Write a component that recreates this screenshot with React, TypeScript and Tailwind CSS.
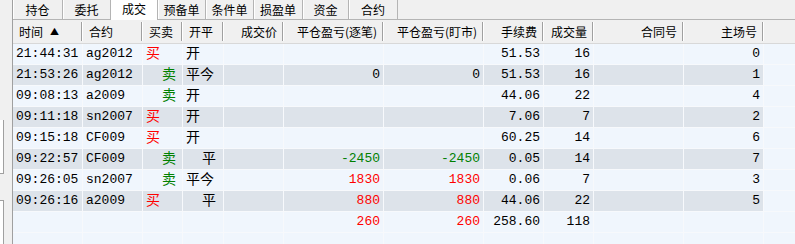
import React from "react";

type Align = "left" | "right";

interface Col {
    key: string;
    label: string;
    width: string;
    align: Align;
}

// column widths measured off the grid lines
const COLS: Col[] = [
    { key: "time", label: "时间", width: "w-[70px]", align: "left" },
    { key: "code", label: "合约", width: "w-[60px]", align: "left" },
    { key: "side", label: "买卖", width: "w-[40px]", align: "left" },
    { key: "oc", label: "开平", width: "w-[41px]", align: "left" },
    { key: "price", label: "成交价", width: "w-[60px]", align: "right" },
    { key: "pnl", label: "平仓盈亏(逐笔)", width: "w-[100px]", align: "right" },
    { key: "mtm", label: "平仓盈亏(盯市)", width: "w-[100px]", align: "right" },
    { key: "fee", label: "手续费", width: "w-[60px]", align: "right" },
    { key: "qty", label: "成交量", width: "w-[50px]", align: "right" },
    { key: "contract", label: "合同号", width: "w-[90px]", align: "right" },
    { key: "seat", label: "主场号", width: "w-[80px]", align: "right" },
];

const TABS = [
    { label: "持仓", width: "w-[50px]" },
    { label: "委托", width: "w-[48px]" },
    { label: "成交", width: "w-[47px]", active: true },
    { label: "预备单", width: "w-[48px]" },
    { label: "条件单", width: "w-[48px]" },
    { label: "损盈单", width: "w-[49px]" },
    { label: "资金", width: "w-[46px]" },
    { label: "合约", width: "w-[49px]" },
];

interface Fill {
    time: string;
    code: string;
    side: "buy" | "sell" | "";
    oc: string;
    pnl?: number;
    mtm?: number;
    fee: string;
    qty: string;
    seat?: string;
}

const FILLS: Fill[] = [
    { time: "21:44:31", code: "ag2012", side: "buy", oc: "开", fee: "51.53", qty: "16", seat: "0" },
    { time: "21:53:26", code: "ag2012", side: "sell", oc: "平今", pnl: 0, mtm: 0, fee: "51.53", qty: "16", seat: "1" },
    { time: "09:08:13", code: "a2009", side: "sell", oc: "开", fee: "44.06", qty: "22", seat: "4" },
    { time: "09:11:18", code: "sn2007", side: "buy", oc: "开", fee: "7.06", qty: "7", seat: "2" },
    { time: "09:15:18", code: "CF009", side: "buy", oc: "开", fee: "60.25", qty: "14", seat: "6" },
    { time: "09:22:57", code: "CF009", side: "sell", oc: "平", pnl: -2450, mtm: -2450, fee: "0.05", qty: "14", seat: "7" },
    { time: "09:26:05", code: "sn2007", side: "sell", oc: "平今", pnl: 1830, mtm: 1830, fee: "0.06", qty: "7", seat: "3" },
    { time: "09:26:16", code: "a2009", side: "buy", oc: "平", pnl: 880, mtm: 880, fee: "44.06", qty: "22", seat: "5" },
    // totals row
    { time: "", code: "", side: "", oc: "", pnl: 260, mtm: 260, fee: "258.60", qty: "118" },
];

function pnlColor(v: number) {
    if (v > 0) return "text-[#ff0000]";
    if (v < 0) return "text-[#008000]";
    return "text-black";
}

function Cell({ col, children }: { col: Col; children?: React.ReactNode }) {
    return (
        <div
            className={`${col.width} flex shrink-0 items-center overflow-hidden whitespace-nowrap border-r border-[#f7f9fc] px-[3px] ${
                col.align === "right" ? "justify-end" : "justify-start"
            }`}
        >
            {children}
        </div>
    );
}

function renderCell(key: string, f: Fill) {
    switch (key) {
        case "time":
            return f.time;
        case "code":
            return f.code;
        case "side":
            if (f.side === "buy") return <span className="text-[14px] text-[#ff0000]">买</span>;
            if (f.side === "sell") return <span className="pl-4 text-[14px] text-[#008000]">卖</span>;
            return null;
        case "oc":
            return <span className={`text-[14px] ${f.oc === "平" ? "pl-4" : ""}`}>{f.oc}</span>;
        case "pnl":
            return f.pnl === undefined ? null : <span className={pnlColor(f.pnl)}>{f.pnl}</span>;
        case "mtm":
            return f.mtm === undefined ? null : <span className={pnlColor(f.mtm)}>{f.mtm}</span>;
        case "fee":
            return f.fee;
        case "qty":
            return f.qty;
        case "seat":
            return f.seat;
        default:
            return null;
    }
}

export default function App() {
    return (
        <div className="flex h-[244px] w-[795px] overflow-hidden bg-[#f0f0f0] font-['Noto_Sans_CJK_SC',sans-serif] text-black">
            {/* left gutter — edges of the neighbouring panel */}
            <div className="flex w-[12px] shrink-0 flex-col">
                <div className="h-[120px]" />
                <div className="h-[54px] w-[4px] border-b border-r border-[#a0a0a0] bg-white" />
                <div className="h-[26px]" />
                <div className="w-[4px] flex-1 border-r border-t border-[#a0a0a0] bg-white" />
            </div>

            <div className="flex min-w-0 flex-1 flex-col border-l border-[#a0a0a0]">
                {/* tab strip */}
                <div className="flex h-[20px] shrink-0">
                    {TABS.map((t) => (
                        <div
                            key={t.label}
                            className={`${t.width} flex shrink-0 items-center justify-center border-r border-[#b4b4b4] text-[12px] leading-none ${
                                t.active ? "bg-white pb-[3px]" : "border-b bg-[#f0f0f0] pt-[1px] shadow-[inset_1px_0_0_#ffffff]"
                            }`}
                        >
                            {t.label}
                        </div>
                    ))}
                    <div className="flex-1 border-b border-[#b4b4b4]" />
                </div>

                {/* grid */}
                <div className="flex flex-1 flex-col bg-[#f0f6fd]">
                    <div className="flex h-[24px] shrink-0 border-b border-[#d8d8d8] bg-[#f0f0f0] text-[12px]">
                        {COLS.map((c) => (
                            <div key={c.key} className={`${c.width} flex shrink-0 items-center`}>
                                <div
                                    className={`flex flex-1 items-center whitespace-nowrap px-[5px] ${
                                        c.align === "right" ? "justify-end" : "justify-start pl-[6px]"
                                    }`}
                                >
                                    {c.label}
                                    {c.key === "time" && <span className="ml-[7px] text-[9px]">▲</span>}
                                </div>
                                <div className="h-[19px] w-[2px] border-l border-r border-l-[#a0a0a0] border-r-white" />
                            </div>
                        ))}
                        <div className="flex-1" />
                    </div>

                    {FILLS.map((f, i) => (
                        <div
                            key={i}
                            className={`flex h-[21px] shrink-0 border-b border-[#f7f9fc] font-['Liberation_Mono','Noto_Sans_CJK_SC',monospace] text-[13px] ${
                                i % 2 === 1 ? "bg-[#dde3ea]" : "bg-[#f0f6fd]"
                            }`}
                        >
                            {COLS.map((c) => (
                                <Cell key={c.key} col={c}>
                                    {renderCell(c.key, f)}
                                </Cell>
                            ))}
                            <div className="flex-1 bg-[#f0f6fd]" />
                        </div>
                    ))}

                    {/* trailing empty row */}
                    <div className="flex h-[21px] shrink-0">
                        {COLS.map((c) => (
                            <Cell key={c.key} col={c} />
                        ))}
                    </div>
                </div>
            </div>
        </div>
    );
}
